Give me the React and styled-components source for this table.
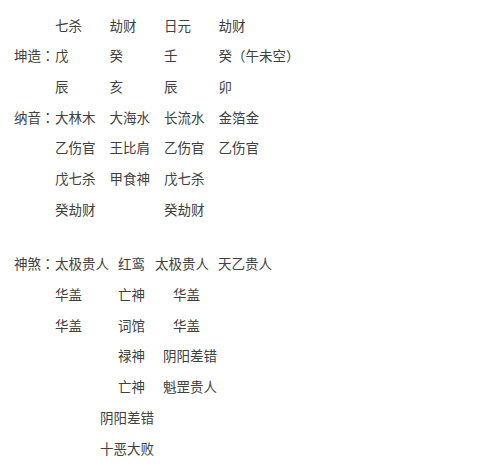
import React from 'react'
import styled, { createGlobalStyle } from 'styled-components'

const GlobalStyle = createGlobalStyle`
  html, body {
    margin: 0;
    padding: 0;
    background: #fff;
  }
`

const Page = styled.div`
  padding: 9.6px 0 0 14px;
  font-family: 'Noto Sans CJK SC', 'Noto Sans', sans-serif;
  font-size: 13.5px;
  color: #404040;
`

const Block = styled.div`
  & + & {
    margin-top: 24px;
  }
`

const Row = styled.div`
  display: flex;
  align-items: center;
  height: 30.7px;
  line-height: 30.7px;
  white-space: nowrap;
  padding-left: ${(p) => p.indent || 0}px;
`

const Cell = styled.span`
  flex: none;
  width: ${(p) => (p.w ? `${p.w}px` : 'auto')};
`

// full-width punctuation drawn centred in its em box (TC glyphs)
const Punct = styled.span`
  font-family: 'Noto Sans CJK TC', sans-serif;
`

const withPunct = (text) =>
  text.split(/([：（）])/).map((part, i) =>
    /^[：（）]$/.test(part) ? <Punct key={i}>{part}</Punct> : part
  )

// block 1: label column + four pillars
const pillars = [
  ['', ['七杀', '劫财', '日元', '劫财']],
  ['坤造：', ['戊', '癸', '壬', '癸（午未空）']],
  ['', ['辰', '亥', '辰', '卯']],
  ['纳音：', ['大林木', '大海水', '长流水', '金箔金']],
  ['', ['乙伤官', '王比肩', '乙伤官', '乙伤官']],
  ['', ['戊七杀', '甲食神', '戊七杀', '']],
  ['', ['癸劫财', '', '癸劫财', '']],
]

// block 2: irregular spacing, so each cell carries its own width
const shensha = [
  { indent: 0, cells: [['神煞：', 41], ['太极贵人', 63], ['红鸾', 37], ['太极贵人', 63], ['天乙贵人']] },
  { indent: 41, cells: [['华盖', 63], ['亡神', 55], ['华盖']] },
  { indent: 41, cells: [['华盖', 63], ['词馆', 55], ['华盖']] },
  { indent: 104, cells: [['禄神', 45], ['阴阳差错']] },
  { indent: 104, cells: [['亡神', 45], ['魁罡贵人']] },
  { indent: 86, cells: [['阴阳差错']] },
  { indent: 86, cells: [['十恶大败']] },
]

export default function App() {
  return (
    <>
      <GlobalStyle />
      <Page>
        <Block>
          {pillars.map(([label, cols], i) => (
            <Row key={i}>
              <Cell w={41}>{withPunct(label)}</Cell>
              {cols.map((c, j) => (
                <Cell key={j} w={j < 3 ? 54.5 : 0}>
                  {withPunct(c)}
                </Cell>
              ))}
            </Row>
          ))}
        </Block>
        <Block>
          {shensha.map((row, i) => (
            <Row key={i} indent={row.indent}>
              {row.cells.map(([t, w], j) => (
                <Cell key={j} w={w}>
                  {withPunct(t)}
                </Cell>
              ))}
            </Row>
          ))}
        </Block>
      </Page>
    </>
  )
}
